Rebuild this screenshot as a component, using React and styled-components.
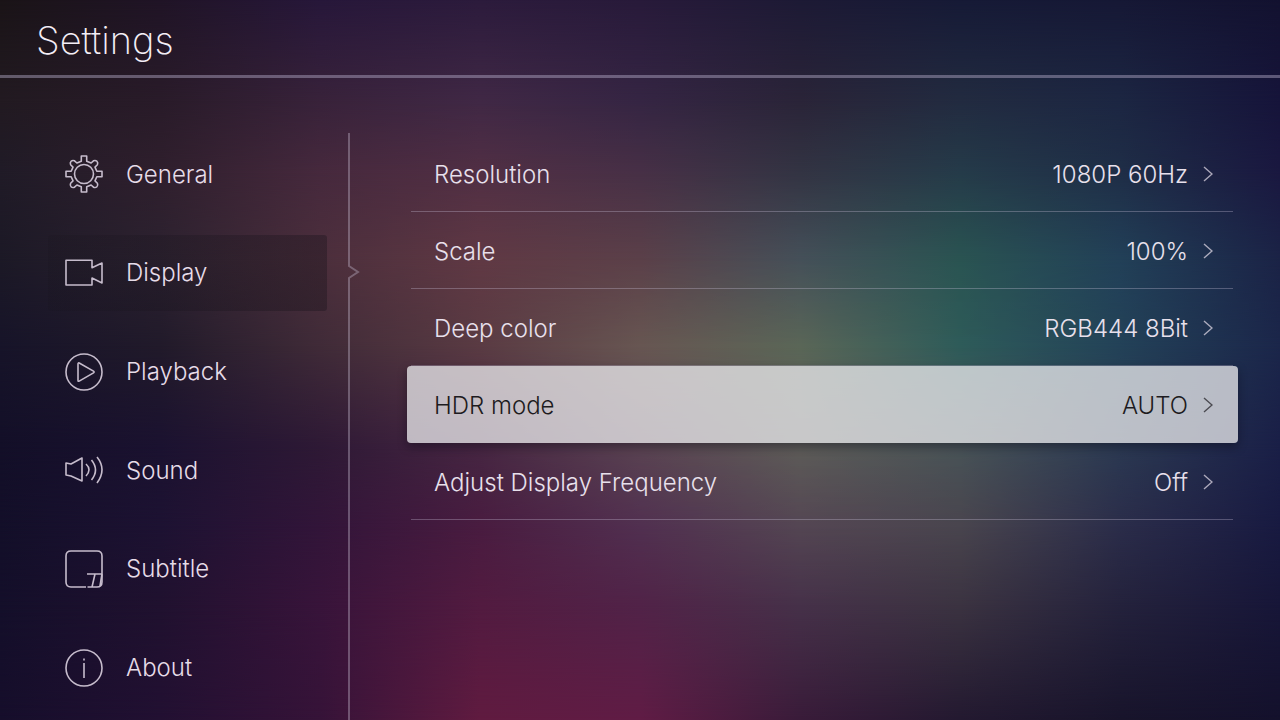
import React, { useState } from "react";
import styled, { createGlobalStyle } from "styled-components";

// Backdrop colours, one band per height on the screen, blended downwards.
const bands = [
  { at: 0, colors: ["#1a1417", "#201426", "#27173a", "#2c1b3c", "#281a3a", "#1d1a35", "#161a36", "#161835", "#131230"] },
  { at: 14, colors: ["#221a21", "#291b29", "#38223a", "#402845", "#352543", "#2a2438", "#222b40", "#1c2642", "#16143a"] },
  { at: 24, colors: ["#201b27", "#2f1f2d", "#46293d", "#512f44", "#473046", "#333443", "#253b49", "#1f2e47", "#1a1840"] },
  { at: 36, colors: ["#1c1926", "#2c2230", "#4c2f3c", "#603944", "#5b4049", "#455059", "#2a5452", "#224058", "#1b2346"] },
  { at: 48, colors: ["#171429", "#211a2a", "#402b38", "#5a3b43", "#675652", "#5a6657", "#2e5b59", "#234258", "#1b264a"] },
  { at: 62, colors: ["#130f28", "#1b1230", "#2e1935", "#462642", "#5a4352", "#5d5c58", "#485357", "#2b3952", "#1a1f47"] },
  { at: 73, colors: ["#130f29", "#1d1232", "#321539", "#491c40", "#513050", "#544653", "#49454e", "#2b2d4a", "#181a41"] },
  { at: 84, colors: ["#140f2a", "#20112f", "#38143a", "#521b40", "#512348", "#463149", "#3b3341", "#24223c", "#171638"] },
  { at: 100, colors: ["#160e2b", "#221032", "#361338", "#601b40", "#601c45", "#391b39", "#231930", "#18142b", "#14112c"] },
];

const GearIcon = () => (
  <Icon viewBox="0 0 38 38">
    <circle cx="19" cy="19" r="9.5" />
    <path d="M16.3 6.2V1h5.4v5.2l4.4 1.8 2.4-2.2q2-.9 3.4.5t.5 3.4L30 12.1l1.8 4.2H37v5.4h-5.2L30 25.9l2.4 2.4q.9 2-.5 3.4t-3.4.5L26.1 30l-4.4 1.8V37h-5.4v-5.2L11.9 30l-2.4 2.2q-2 .9-3.4-.5t-.5-3.4L8 25.9l-1.8-4.2H1v-5.4h5.2L8 12.1 5.6 9.7q-.9-2 .5-3.4t3.4-.5L11.9 8z" />
  </Icon>
);

const CameraIcon = () => (
  <Icon viewBox="0 0 38 38">
    <path d="M1 6.3h26v7.500L37 9v20l-10-5v7H1z" />
  </Icon>
);

const PlayIcon = () => (
  <Icon viewBox="0 0 38 38">
    <circle cx="19" cy="19" r="18" />
    <path d="M13 11v16.500q0 1.200 1.200.6l14.300-8.200q1.200-.9 0-1.800L14.200 10Q13 9.500 13 11z" />
  </Icon>
);

const SoundIcon = () => (
  <Icon viewBox="0 0 38 38">
    <path d="M1 12l5 1 11-6v23L6 25l-5-1z" />
    <path d="M21 13q6 5.500 0 12M26.500 9q8 10 0 20M32 6q10 12.500 0 26" />
  </Icon>
);

const SubtitleIcon = () => (
  <Icon viewBox="0 0 38 38">
    <path d="M21 37H6q-5 0-5-5V6q0-5 5-5h26q5 0 5 5v26q0 5-5 5" />
    <path d="M22 24h15M30 24l-3 13M22.500 37H32M37 24l-2 12" />
  </Icon>
);

const AboutIcon = () => (
  <Icon viewBox="0 0 38 38">
    <circle cx="19" cy="19" r="18" />
    <path d="M19 14v15M19 9.500v2" />
  </Icon>
);

const sections = [
  { name: "General", icon: <GearIcon /> },
  { name: "Display", icon: <CameraIcon /> },
  { name: "Playback", icon: <PlayIcon /> },
  { name: "Sound", icon: <SoundIcon /> },
  { name: "Subtitle", icon: <SubtitleIcon /> },
  { name: "About", icon: <AboutIcon /> },
];

const options = [
  { label: "Resolution", value: "1080P 60Hz" },
  { label: "Scale", value: "100%" },
  { label: "Deep color", value: "RGB444 8Bit" },
  { label: "HDR mode", value: "AUTO" },
  { label: "Adjust Display Frequency", value: "Off" },
];

const App = () => {
  const [section, setSection] = useState("Display");
  const [focused, setFocused] = useState("HDR mode");

  return (
    <Screen>
      <GlobalStyle />
      {bands.map((band, i) => (
        <Band
          key={band.at}
          $colors={band.colors}
          $from={i ? bands[i - 1].at : -1}
          $to={band.at}
        />
      ))}
      <Page>
        <Header>
          <Title>Settings</Title>
        </Header>
        <Main>
          <Nav aria-label="Settings sections">
            {sections.map((item) => (
              <NavButton
                key={item.name}
                $active={item.name === section}
                onClick={() => setSection(item.name)}
              >
                {item.icon}
                {item.name}
              </NavButton>
            ))}
          </Nav>
          <Divider>
            <UpperLine />
            <Notch viewBox="0 0 12 14">
              <path d="M1 0v1L10 7l-9 6v1" />
            </Notch>
            <LowerLine />
          </Divider>
          <List>
            {options.map((option) => (
              <Row
                key={option.label}
                $focused={option.label === focused}
                onClick={() => setFocused(option.label)}
              >
                <Label>{option.label}</Label>
                <Value>{option.value}</Value>
                <Chevron viewBox="0 0 10 16">
                  <path d="M1 1l8 7-8 7" />
                </Chevron>
              </Row>
            ))}
          </List>
        </Main>
      </Page>
    </Screen>
  );
};

const GlobalStyle = createGlobalStyle`
  * {
    box-sizing: border-box;
  }
  body {
    margin: 0;
    background-color: #1a1430;
  }
  body, button {
    font-family: Inter, "Liberation Sans", sans-serif;
    font-weight: 300;
  }
  button {
    border: none;
    background: none;
    text-align: left;
    cursor: pointer;
  }
`;

const Screen = styled.div`
  display: grid;
  grid-template-columns: 1fr;
  min-height: 100vh;
`;

const Band = styled.div`
  grid-area: 1 / 1;
  background: linear-gradient(to right, ${({ $colors }) => $colors.join(", ")});
  mask-image: linear-gradient(
    to bottom,
    transparent ${({ $from }) => $from}%,
    black ${({ $to }) => $to}%
  );
`;

const Page = styled.div`
  grid-area: 1 / 1;
  z-index: 1;
  display: flex;
  flex-direction: column;
`;

const Header = styled.header`
  display: flex;
  align-items: center;
  height: 78px;
  padding: 0 36px;
  border-bottom: 3px solid rgba(180, 170, 200, 0.45);
`;

const Title = styled.h1`
  margin: 0;
  padding-top: 4px;
  color: #f4eef6;
  font-size: 38px;
  font-weight: 200;
  line-height: 44px;
`;

const Main = styled.main`
  display: flex;
  flex: 1;
`;

const Nav = styled.nav`
  display: grid;
  grid-auto-rows: 1fr;
  align-items: center;
  width: 348px;
  padding: 47px 21px 3px 48px;
`;

const NavButton = styled.button`
  display: flex;
  align-items: center;
  gap: 23px;
  height: 76px;
  padding: 0 17px;
  border-radius: 3px;
  background: ${({ $active }) =>
    $active ? "linear-gradient(to right, rgba(20, 16, 24, 0.15), rgba(20, 16, 24, 0.35))" : "none"};
  color: #e6dce8;
  font-size: 24px;
`;

const Icon = styled.svg`
  width: 38px;
  height: 38px;
  fill: none;
  stroke: #c6bccc;
  stroke-width: 1.6;
  stroke-linejoin: round;
`;

const Divider = styled.div`
  display: flex;
  flex-direction: column;
  width: 12px;
  padding-top: 55px;
`;

const UpperLine = styled.div`
  width: 2px;
  height: 132px;
  background-color: rgba(190, 180, 200, 0.4);
`;

const LowerLine = styled(UpperLine)`
  flex: 1;
`;

const Notch = styled.svg`
  width: 12px;
  height: 14px;
  fill: none;
  stroke: rgba(190, 180, 200, 0.4);
  stroke-width: 2;
`;

const List = styled.section`
  flex: 1;
  padding: 57px 47px 0 51px;
`;

const Row = styled.button`
  display: flex;
  align-items: center;
  width: ${({ $focused }) => ($focused ? "calc(100% + 9px)" : "100%")};
  height: 77px;
  margin: ${({ $focused }) => ($focused ? "0 -5px 0 -4px" : "0")};
  padding: ${({ $focused }) => ($focused ? "2px 25px 0 27px" : "2px 20px 0 23px")};
  border-bottom: 1px solid ${({ $focused }) => ($focused ? "transparent" : "rgba(200, 190, 215, 0.33)")};
  border-radius: ${({ $focused }) => ($focused ? "4px" : "0")};
  background: ${({ $focused }) => ($focused ? "rgba(234, 234, 236, 0.76) border-box" : "none")};
  box-shadow: ${({ $focused }) => ($focused ? "0 4px 10px rgba(10, 8, 20, 0.4)" : "none")};
  color: ${({ $focused }) => ($focused ? "#1d1b20" : "#e8e0ec")};
  font-size: 24px;
`;

const Label = styled.span`
  flex: 1;
`;

const Value = styled.span`
  margin-right: 15px;
`;

const Chevron = styled.svg`
  width: 10px;
  height: 16px;
  fill: none;
  stroke: currentColor;
  stroke-width: 1.4;
  opacity: 0.7;
`;

export default App;
